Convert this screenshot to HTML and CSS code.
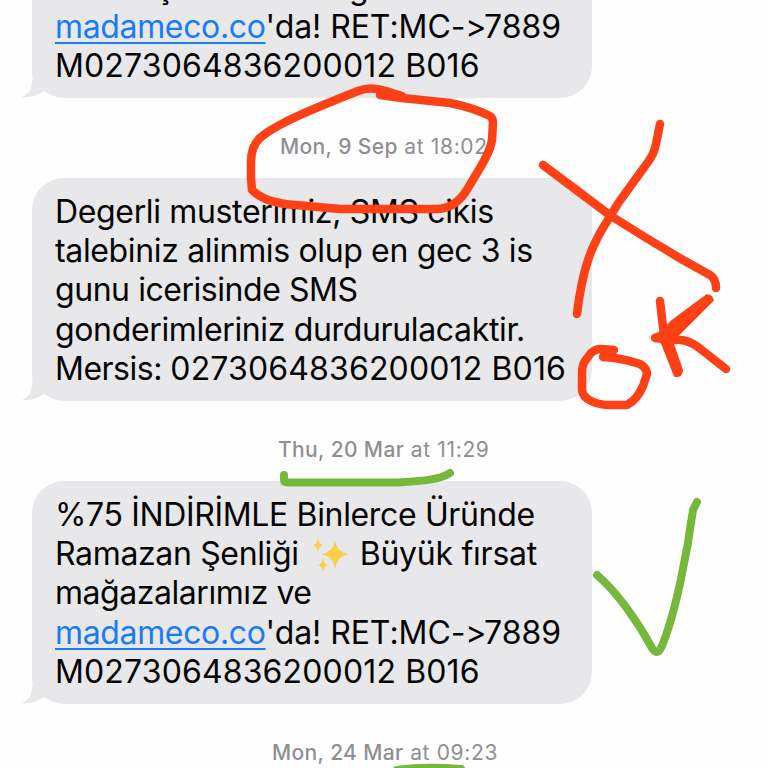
FILE: index.html
```html
<!DOCTYPE html>
<html lang="tr">
<head>
<meta charset="utf-8">
<title>Messages</title>
<link rel="stylesheet" href="styles.css">
</head>
<body>
<main class="thread">
  <section class="bubble bubble-cut">
    <p class="line line-hidden"><span class="cedilla">ş</span><span>g</span></p>
    <p class="line l-link"><a class="link">madameco.co</a><span class="rest">'da! RET:MC-&gt;7889</span></p>
    <p class="line l-code">M0273064836200012 B016</p>
    <svg class="tail" viewBox="0 0 44 18"><path d="M10 0V1C10 9 7 14 0 17C8 18 16 15 22 11C28 15 35 18 44 18V0Z"/></svg>
  </section>
  <time class="stamp s1"><b>Mon, 9 Sep</b> at 18:02</time>
  <section class="bubble">
    <p class="line">Degerli musterimiz, SMS cikis</p>
    <p class="line">talebiniz alinmis olup en gec 3 is</p>
    <p class="line tight">gunu icerisinde SMS</p>
    <p class="line">gonderimleriniz durdurulacaktir.</p>
    <p class="line l-code"><span class="label">Mersis: </span>0273064836200012 B016</p>
    <svg class="tail" viewBox="0 0 44 18"><path d="M10 0V1C10 9 7 14 0 17C8 18 16 15 22 11C28 15 35 18 44 18V0Z"/></svg>
  </section>
  <time class="stamp s2"><b>Thu, 20 Mar</b> at 11:29</time>
  <section class="bubble">
    <p class="line">%75 İNDİRİMLE Binlerce Üründe</p>
    <p class="line"><span>Ramazan Şenliği</span><svg class="sparkles" viewBox="0 0 36 36"><path d="M22 4Q23.500 16 36 18Q23.500 20 22 34Q20.500 20 8 18Q20.500 16 22 4Z"/><path d="M5 2Q6 8 10 9Q6 10 5 16Q4 10 0 9Q4 8 5 2Z"/><path d="M10 22Q11 28 15 29Q11 30 10 36Q9 30 5 29Q9 28 10 22Z"/></svg><span class="offer">Büyük fırsat</span></p>
    <p class="line tight">mağazalarımız ve</p>
    <p class="line l-link"><a class="link">madameco.co</a><span class="rest">'da! RET:MC-&gt;7889</span></p>
    <p class="line l-code">M0273064836200012 B016</p>
    <svg class="tail" viewBox="0 0 44 18"><path d="M10 0V1C10 9 7 14 0 17C8 18 16 15 22 11C28 15 35 18 44 18V0Z"/></svg>
  </section>
  <time class="stamp s3"><b>Mon, 24 Mar</b> at 09:23</time>
</main>
<svg class="ink" viewBox="0 0 768 768">
  <g class="red">
    <path d="M380 95L402 98L450 103C465 106 480 111 490 116Q493 118 493 123L492 140C490 153 480 168 468 188Q456 209 436 209H340L296 205C277 204 262 200 252 190L251 178V162Q251 146 260 138C276 124 310 110 358 91Q370 86 386 91L402 96"/>
    <path d="M660 124L656 144Q654 154 648 162L619 202L606 223C590 248 582 272 577 314"/>
    <path d="M543 165L583 195L611 216L648 239L683 260L710 275Q716 279 716 288"/>
    <path d="M614 350L600 349Q596 349 591 353L585 361Q582 365 582 374L582 390C583 400 597 405 610 405H627Q637 400 643 386L647 374Q647 368 640 364Q622 358 603 357"/>
    <path d="M660 301L663 327L665 340L677 372"/>
    <path class="fill" d="M707 295L713 300L676 337L672 341L682 370Q682 377 675 376L661 341L657 336L672 321Z"/>
    <path d="M709 299L675 330L655 338L674 340Q686 338 698 347L726 369"/>
  </g>
  <g class="green">
    <path d="M284 475V480Q284 482.500 288 482.500H398C420 481 440 480 450 473"/>
    <path d="M597 575C617 592 638 622 652 648Q657 656 661 648C676 614 688 547 693 510L697 502"/>
    <path d="M397 770Q425 766 461 769"/>
  </g>
</svg>
</body>
</html>
```
FILE: styles.css
```css
* { box-sizing: border-box; }
body {
  margin: 0;
  width: 768px;
  height: 768px;
  overflow: hidden;
  position: relative;
  background: #fefefe;
  font-family: Inter, "Liberation Sans", sans-serif;
  font-feature-settings: "calt" 0;
}
.thread { display: flex; flex-direction: column; }
.bubble {
  position: relative;
  width: 560px;
  height: 223.500px;
  margin-left: 32px;
  padding: 14.500px 0 0 23px;
  border-radius: 32px 32px 32px 24px;
  background: #e8e8ea;
  color: #050505;
}
.bubble-cut {
  height: 98px;
  padding-top: 0;
  border-top-left-radius: 0;
  border-top-right-radius: 0;
}
.bubble-cut .line-hidden { margin-top: -32px; padding-left: 101px; }
.cedilla { display: inline-block; width: 193px; }
.line {
  margin: 0;
  height: 39.200px;
  line-height: 39.200px;
  font-size: 32px;
  letter-spacing: -0.350px;
  white-space: pre;
}
.tight { letter-spacing: -0.450px; }
.label { letter-spacing: -0.500px; }
.l-code { letter-spacing: 0.140px; }
.rest { letter-spacing: -0.060px; }
.offer { letter-spacing: -0.250px; }
.link { color: #1a7cf5; text-decoration: underline; text-decoration-thickness: 2px; text-underline-offset: 4px; }
.tail {
  position: absolute;
  left: -10px;
  bottom: 0;
  width: 44px;
  height: 18px;
  fill: #e8e8ea;
  background: linear-gradient(#fefefe, #fefefe) 10px 0 / 34px 18px no-repeat;
}
.stamp {
  display: block;
  height: 79.500px;
  padding-top: 32.500px;
  line-height: 31px;
  font-size: 21px;
  letter-spacing: 0.650px;
  color: #8f8f92;
  white-space: pre;
}
.stamp b { font-weight: 500; letter-spacing: 0.380px; }
.s1 { padding-left: 280px; }
.s2 { padding-left: 278px; }
.s3 { padding-left: 272px; }
.sparkles { width: 36px; height: 36px; margin: 0 11px 0 14px; vertical-align: -7px; fill: #fccf4b; }
.ink {
  position: absolute;
  left: 0;
  top: 0;
  width: 768px;
  height: 768px;
  fill: none;
  stroke-linecap: round;
  stroke-linejoin: round;
  stroke-width: 8.500px;
}
.red { stroke: #fe4016; }
.red .fill { fill: #fe4016; stroke-width: 2px; }
.green { stroke: #76b83c; stroke-width: 8px; }
```
